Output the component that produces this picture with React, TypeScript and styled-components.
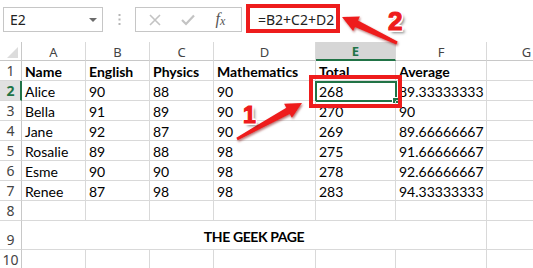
import styled, { createGlobalStyle } from 'styled-components';

const GREEN = '#217346';
const GRID = '#d9d9d9';
const RED = '#ee1c1c';

const GlobalStyle = createGlobalStyle`
  html, body {
    margin: 0;
    padding: 0;
    background: #ffffff;
  }
  body {
    font-family: Lato, "Liberation Sans", sans-serif;
  }
`;

const COLS = ['A', 'B', 'C', 'D', 'E', 'F', 'G'];

const ROWS: string[][] = [
  ['Name', 'English', 'Physics', 'Mathematics', 'Total', 'Average', ''],
  ['Alice', '90', '88', '90', '268', '89.33333333', ''],
  ['Bella', '91', '89', '90', '270', '90', ''],
  ['Jane', '92', '87', '90', '269', '89.66666667', ''],
  ['Rosalie', '89', '88', '98', '275', '91.66666667', ''],
  ['Esme', '90', '90', '98', '278', '92.66666667', ''],
  ['Renee', '87', '98', '98', '283', '94.33333333', ''],
  ['', '', '', '', '', '', ''],
];

const App = () => {
  return (
    <Page>
      <GlobalStyle />
      <Toolbar>
        <NameBox>
          <span>E2</span>
          <Caret />
        </NameBox>
        <Grip>
          <svg width="3" height="11" viewBox="0 0 3 11">
            <rect x="0.5" y="0" width="2" height="2" fill="#b5b5b5" />
            <rect x="0.5" y="4.5" width="2" height="2" fill="#b5b5b5" />
            <rect x="0.5" y="9" width="2" height="2" fill="#b5b5b5" />
          </svg>
        </Grip>
        <FxBox>
          <IconSlot>
            <svg width="12" height="12" viewBox="0 0 12 12">
              <path d="M1 1 L11 11 M11 1 L1 11" stroke="#c3c3c3" strokeWidth="1.6" />
            </svg>
          </IconSlot>
          <IconSlot>
            <svg width="14" height="12" viewBox="0 0 14 12">
              <path d="M1 6 L5 10 L13 1.5" stroke="#c3c3c3" strokeWidth="2.2" fill="none" />
            </svg>
          </IconSlot>
          <FxLabel>
            f<sub>x</sub>
          </FxLabel>
        </FxBox>
        <FormulaInput>=B2+C2+D2</FormulaInput>
      </Toolbar>

      <Sheet>
        <Corner />
        {COLS.map((c) => (
          <ColHead key={c} $active={c === 'E'}>
            {c}
          </ColHead>
        ))}

        {ROWS.map((row, r) => (
          <Row key={r} row={row} index={r + 1} />
        ))}

        <RowHead $active={false}>9</RowHead>
        <Merged>THE GEEK PAGE</Merged>
        <Cell />

        <RowHead $active={false}>10</RowHead>
        {COLS.map((c) => (
          <Cell key={c} />
        ))}
      </Sheet>

      <Highlight $x={246} $y={4} $w={94} $h={29} />
      <Highlight $x={309} $y={75} $w={93} $h={33} />

      <ArrowLayer width="533" height="268" viewBox="0 0 533 268">
        <defs>
          <filter id="drop" x="-20%" y="-20%" width="140%" height="140%">
            <feDropShadow dx="1" dy="1.5" stdDeviation="0.8" floodColor="#7a0000" floodOpacity="0.55" />
          </filter>
        </defs>
        <polygon
          filter="url(#drop)"
          fill={RED}
          points="342,17 359.9,16.6 358,20.6 397.6,41.6 396.4,44.4 355,27 353.1,31"
        />
        <polygon
          filter="url(#drop)"
          fill={RED}
          points="302,103 291.9,117.8 289.7,113.9 237.7,140.3 236.3,137.7 286.3,107.7 284.1,103.8"
        />
      </ArrowLayer>

      <Callout $x={243} $y={104} $size={23}>
        1
      </Callout>
      <Callout $x={388} $y={8} $size={26}>
        2
      </Callout>
    </Page>
  );
};

const Row = ({ row, index }: { row: string[]; index: number }) => {
  const active = index === 2;
  return (
    <>
      <RowHead $active={active}>{index}</RowHead>
      {row.map((v, i) => (
        <Cell key={i} $bold={index === 1} $selected={active && i === 4}>
          {v}
        </Cell>
      ))}
    </>
  );
};

export default App;

const Page = styled.div`
  position: relative;
  width: 533px;
  height: 268px;
  overflow: hidden;
  background: #ffffff;
`;

const Toolbar = styled.div`
  display: flex;
  align-items: flex-start;
  height: 42px;
  padding: 7px 0 0 3px;
  box-sizing: border-box;
`;

const NameBox = styled.div`
  display: flex;
  align-items: center;
  justify-content: space-between;
  width: 100px;
  height: 25px;
  box-sizing: border-box;
  border: 1px solid #c6c6c6;
  padding: 0 5px 0 6px;
  font-family: "Noto Sans", "Open Sans", sans-serif;
  font-size: 14px;
  color: #222;
`;

const Caret = styled.span`
  width: 0;
  height: 0;
  border-left: 4px solid transparent;
  border-right: 4px solid transparent;
  border-top: 4px solid #6b6b6b;
`;

const Grip = styled.div`
  display: flex;
  align-items: center;
  justify-content: center;
  width: 32px;
  height: 25px;
`;

const FxBox = styled.div`
  display: flex;
  align-items: center;
  justify-content: space-around;
  width: 107px;
  height: 25px;
  box-sizing: border-box;
  border: 1px solid #c6c6c6;
  padding: 0 4px 0 2px;
`;

const IconSlot = styled.span`
  display: flex;
  align-items: center;
  justify-content: center;
  width: 30px;
`;

const FxLabel = styled.span`
  width: 30px;
  text-align: center;
  font-family: "Liberation Serif", serif;
  font-style: italic;
  font-size: 16px;
  color: #555;

  sub {
    font-size: 12px;
    vertical-align: -1px;
  }
`;

const FormulaInput = styled.div`
  flex: 1;
  height: 25px;
  display: flex;
  align-items: center;
  padding-left: 16px;
  font-family: "Noto Sans", "Open Sans", sans-serif;
  font-size: 14px;
  color: #222;
`;

const Sheet = styled.div`
  display: grid;
  grid-template-columns: 22px 64px 64px 64px 102px 80px 91px 80px;
  grid-template-rows: 19px repeat(8, 20px) 29px 20px;
`;

const Corner = styled.div`
  position: relative;
  box-sizing: border-box;
  border-right: 1px solid #c8c8c8;
  border-bottom: 1px solid #c8c8c8;

  &::after {
    content: '';
    position: absolute;
    right: 3px;
    bottom: 2px;
    width: 0;
    height: 0;
    border-left: 11px solid transparent;
    border-bottom: 11px solid #dcdcdc;
  }
`;

const ColHead = styled.div<{ $active: boolean }>`
  display: flex;
  align-items: center;
  justify-content: center;
  box-sizing: border-box;
  border-right: 1px solid ${GRID};
  border-bottom: ${(p) => (p.$active ? `2px solid ${GREEN}` : '1px solid #c8c8c8')};
  background: ${(p) => (p.$active ? '#d6d6d6' : '#ffffff')};
  color: ${(p) => (p.$active ? GREEN : '#444')};
  font-family: "Noto Sans", "Open Sans", sans-serif;
  font-weight: ${(p) => (p.$active ? 700 : 400)};
  font-size: 13px;
  padding-top: 1px;
`;

const RowHead = styled.div<{ $active: boolean }>`
  display: flex;
  align-items: flex-end;
  justify-content: center;
  box-sizing: border-box;
  border-right: ${(p) => (p.$active ? `2px solid ${GREEN}` : '1px solid #c8c8c8')};
  border-bottom: 1px solid ${GRID};
  background: ${(p) => (p.$active ? '#e1e1e1' : '#ffffff')};
  color: ${(p) => (p.$active ? GREEN : '#444')};
  font-family: "Noto Sans", "Open Sans", sans-serif;
  font-weight: ${(p) => (p.$active ? 700 : 400)};
  font-size: 14px;
  line-height: 18px;
  padding-left: ${(p) => (p.$active ? '1px' : '0')};
`;

const Cell = styled.div<{ $bold?: boolean; $selected?: boolean }>`
  position: relative;
  display: flex;
  align-items: flex-end;
  box-sizing: border-box;
  border-right: 1px solid ${GRID};
  border-bottom: 1px solid ${GRID};
  padding: 0 3px;
  font-size: 14px;
  line-height: 17px;
  font-weight: ${(p) => (p.$bold ? 700 : 400)};
  color: #000;
  white-space: nowrap;

  ${(p) =>
    p.$selected &&
    `
    &::before {
      content: '';
      position: absolute;
      left: -1px;
      top: 0;
      right: -2px;
      bottom: -2px;
      border: 2px solid ${GREEN};
    }
    &::after {
      content: '';
      position: absolute;
      right: -4px;
      bottom: -4px;
      width: 5px;
      height: 5px;
      background: ${GREEN};
      border: 1px solid #fff;
    }
  `}
`;

const Merged = styled.div`
  grid-column: span 6;
  display: flex;
  align-items: center;
  justify-content: center;
  box-sizing: border-box;
  border-right: 1px solid ${GRID};
  border-bottom: 1px solid ${GRID};
  font-size: 14px;
  font-weight: 700;
  letter-spacing: -0.4px;
  padding-top: 2px;
  color: #000;
`;

const Highlight = styled.div<{ $x: number; $y: number; $w: number; $h: number }>`
  position: absolute;
  left: ${(p) => p.$x}px;
  top: ${(p) => p.$y}px;
  width: ${(p) => p.$w}px;
  height: ${(p) => p.$h}px;
  box-sizing: border-box;
  border: 4px solid ${RED};
  pointer-events: none;
`;

const ArrowLayer = styled.svg`
  position: absolute;
  left: 0;
  top: 0;
  pointer-events: none;
`;

const Callout = styled.span<{ $x: number; $y: number; $size: number }>`
  position: absolute;
  left: ${(p) => p.$x}px;
  top: ${(p) => p.$y}px;
  font-family: "Liberation Sans", Arial, sans-serif;
  font-weight: 700;
  font-size: ${(p) => p.$size}px;
  line-height: 1;
  color: ${RED};
  -webkit-text-stroke: 1.2px ${RED};
  text-shadow:
    2px 0 0 #fff,
    -2px 0 0 #fff,
    0 2px 0 #fff,
    0 -2px 0 #fff,
    1.5px 1.5px 0 #fff,
    -1.5px -1.5px 0 #fff,
    1.5px -1.5px 0 #fff,
    -1.5px 1.5px 0 #fff,
    3px 3px 3px rgba(0, 0, 0, 0.5);
`;
